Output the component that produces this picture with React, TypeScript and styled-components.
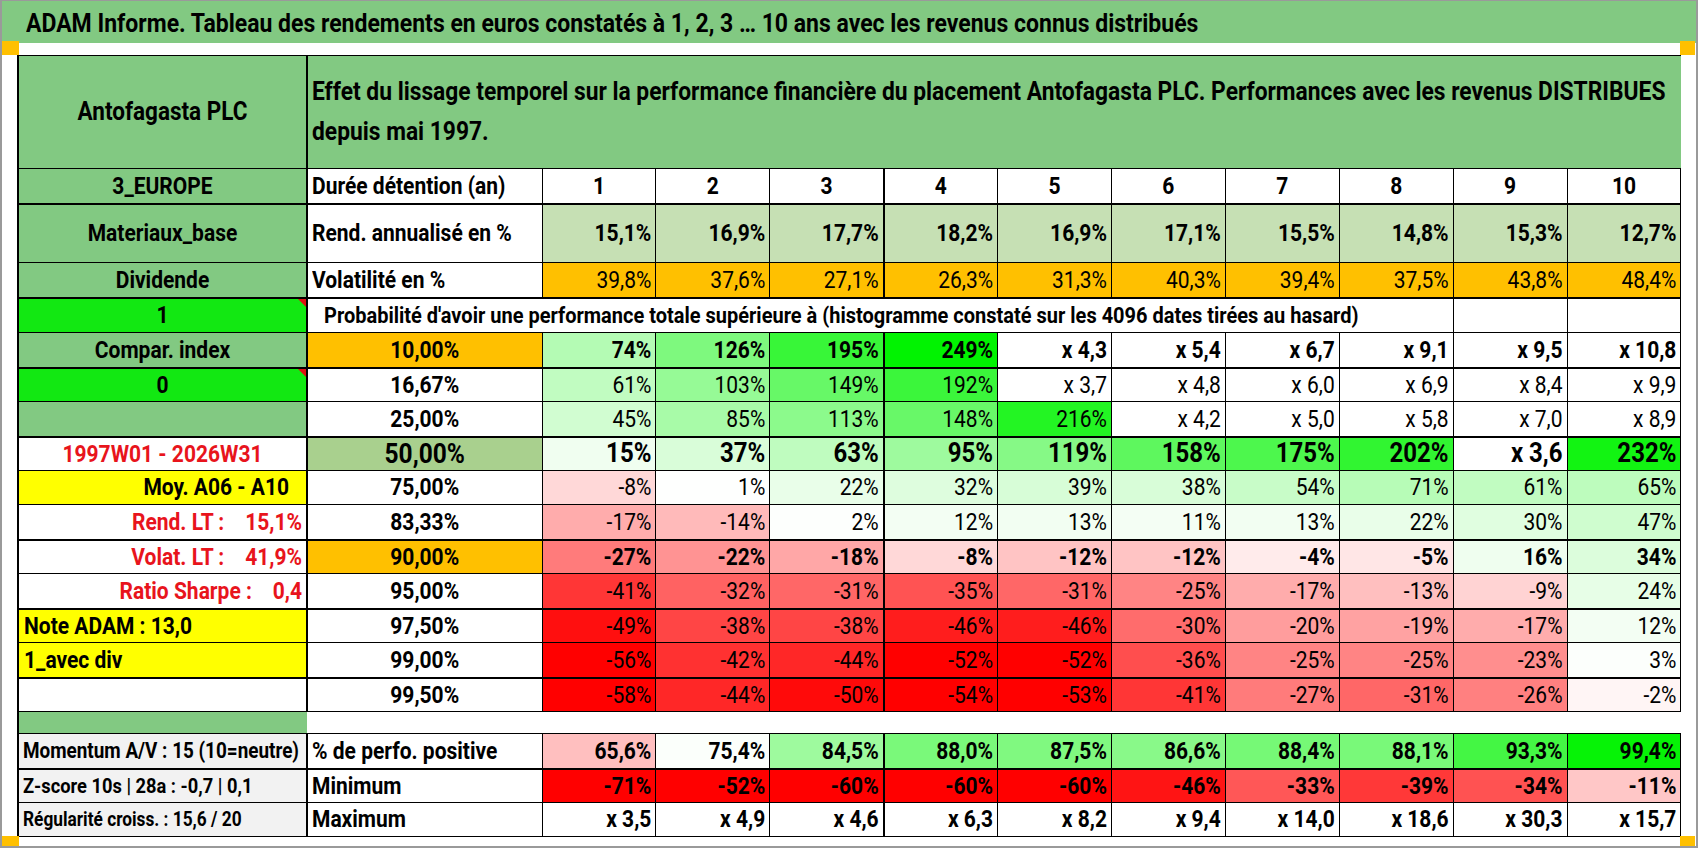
import React from 'react';
import styled, { createGlobalStyle, css } from 'styled-components';

const FONT = `Roboto, "Liberation Sans", sans-serif`;

const GREEN = '#82c982';
const BRIGHT = '#12e812';
const ORANGE = '#ffc000';
const YELLOW = '#ffff00';
const OLIVE = '#c6e0b4';
const MID = '#a9d08e';
const GREY = '#f2f2f2';
const RED_TEXT = '#e8141c';
const STRETCH = 'scaleY(1.14)';

const GlobalStyle = createGlobalStyle`
  html, body { margin: 0; padding: 0; background: #fff; }
  body { font-family: ${FONT}; }
`;

const Frame = styled.div`
  position: relative;
  box-sizing: border-box;
  width: 1698px;
  height: 848px;
  background: #fff;
  border-top: 1px solid #9a9a9a;
  border-left: 2px solid #9a9a9a;
  border-right: 2px solid #9a9a9a;
  border-bottom: 2px solid #9a9a9a;
  overflow: hidden;
  font-family: ${FONT};
  color: #000;
`;

const TitleBar = styled.div`
  height: 42px;
  box-sizing: border-box;
  background: ${GREEN};
  padding: 3px 0 0 24px;
  display: flex;
  align-items: center;
  font-size: 23px;
  font-weight: 700;
  white-space: nowrap;
`;

const Txt = styled.span`
  display: inline-block;
  transform: ${STRETCH};
  transform-origin: 50% 55%;
`;

const Sheet = styled.div`
  padding: 12px 0 0 15px;
`;

const Grid = styled.table`
  border-collapse: collapse;
  table-layout: fixed;
  width: 1663px;
`;

const Col = styled.col<{ $w: number }>`
  width: ${(p) => p.$w}px;
`;

const Row = styled.tr<{ $h: number; $thick?: boolean; $top?: boolean }>`
  height: ${(p) => p.$h}px;
  --bb: ${(p) => (p.$thick ? '2px' : '1px')} solid #000;
  --bt: ${(p) => (p.$top ? '1px solid #000' : 'none')};
`;

type Align = 'left' | 'center' | 'right';

type TdProps = {
  $bg?: string;
  $align?: Align;
  $bold?: boolean;
  $size?: number;
  $color?: string;
  $thickRight?: boolean;
  $noRight?: boolean;
  $noBottom?: boolean;
  $pl?: number;
  $pr?: number;
  $flag?: boolean;
};

const Td = styled.td<TdProps>`
  box-sizing: border-box;
  padding: 0 ${(p) => p.$pr ?? 4}px 0 ${(p) => p.$pl ?? 4}px;
  background: ${(p) => p.$bg ?? '#fff'};
  text-align: ${(p) => p.$align ?? 'right'};
  font-weight: ${(p) => (p.$bold ? 700 : 400)};
  font-size: ${(p) => p.$size ?? 21}px;
  color: ${(p) => p.$color ?? '#000'};
  white-space: pre;
  overflow: hidden;
  vertical-align: middle;
  line-height: 1.15;
  border-top: var(--bt);
  border-bottom: ${(p) => (p.$noBottom ? 'none' : 'var(--bb)')};
  border-right: ${(p) => (p.$noRight ? 'none' : p.$thickRight ? '2px solid #000' : '1px solid #000')};
  &:first-child {
    border-left: 2px solid #000;
  }
  ${(p) =>
    p.$flag &&
    css`
      position: relative;
      &::after {
        content: '';
        position: absolute;
        top: 0;
        right: 0;
        border-top: 8px solid #e01010;
        border-left: 8px solid transparent;
      }
    `}
`;

const Cell = ({ children, colSpan, ...rest }: TdProps & { colSpan?: number; children?: React.ReactNode }) => (
  <Td colSpan={colSpan} {...rest}>
    {children !== undefined && children !== '' ? <Txt>{children}</Txt> : null}
  </Td>
);

const HeadCell = styled.td`
  box-sizing: border-box;
  padding: 0 4px;
  background: ${GREEN};
  border-top: var(--bt);
  border-bottom: var(--bb);
  vertical-align: middle;
`;

const HeadText = styled.div`
  font-size: 22.8px;
  font-weight: 700;
  line-height: 40px;
  white-space: nowrap;
  transform: ${STRETCH};
  transform-origin: 50% 55%;
`;

const Handle = styled.div<{ $left: number; $top: number; $w: number; $h: number }>`
  position: absolute;
  left: ${(p) => p.$left}px;
  top: ${(p) => p.$top}px;
  width: ${(p) => p.$w}px;
  height: ${(p) => p.$h}px;
  background: ${ORANGE};
`;

const clamp = (t: number) => Math.max(0, Math.min(1, t));
const green = (t: number) => {
  const k = clamp(t);
  const c = Math.round(255 * (1 - k));
  const g = Math.round(255 - 12 * k);
  return `rgb(${c},${g},${c})`;
};
const red = (t: number) => {
  const c = Math.round(255 * (1 - clamp(t)));
  return `rgb(255,${c},${c})`;
};
const num = (s: string) => parseFloat(s.replace('%', '').replace(',', '.'));
const quantBg = (s: string) => {
  if (s.startsWith('x')) return '#ffffff';
  const v = num(s);
  return v >= 0 ? green(v / 250) : red(-v / 52);
};

const YEARS = ['1', '2', '3', '4', '5', '6', '7', '8', '9', '10'];
const REND = ['15,1%', '16,9%', '17,7%', '18,2%', '16,9%', '17,1%', '15,5%', '14,8%', '15,3%', '12,7%'];
const VOL = ['39,8%', '37,6%', '27,1%', '26,3%', '31,3%', '40,3%', '39,4%', '37,5%', '43,8%', '48,4%'];

type QRow = {
  a: string;
  aBg: string;
  aAlign?: Align;
  aColor?: string;
  aPr?: number;
  aPl?: number;
  flag?: boolean;
  q: string;
  qBg: string;
  bold?: boolean;
  big?: boolean;
  thick?: boolean;
  h: number;
  vals: string[];
};

const QROWS: QRow[] = [
  { a: 'Compar. index', aBg: GREEN, q: '10,00%', qBg: ORANGE, bold: true, thick: true, h: 35,
    vals: ['74%', '126%', '195%', '249%', 'x 4,3', 'x 5,4', 'x 6,7', 'x 9,1', 'x 9,5', 'x 10,8'] },
  { a: '0', aBg: BRIGHT, flag: true, q: '16,67%', qBg: '#fff', h: 34,
    vals: ['61%', '103%', '149%', '192%', 'x 3,7', 'x 4,8', 'x 6,0', 'x 6,9', 'x 8,4', 'x 9,9'] },
  { a: '', aBg: GREEN, q: '25,00%', qBg: '#fff', thick: true, h: 35,
    vals: ['45%', '85%', '113%', '148%', '216%', 'x 4,2', 'x 5,0', 'x 5,8', 'x 7,0', 'x 8,9'] },
  { a: '1997W01 - 2026W31', aBg: '#fff', aColor: RED_TEXT, q: '50,00%', qBg: MID, bold: true, big: true, h: 34,
    vals: ['15%', '37%', '63%', '95%', '119%', '158%', '175%', '202%', 'x 3,6', '232%'] },
  { a: 'Moy. A06 - A10', aBg: YELLOW, aAlign: 'right', aPr: 17, q: '75,00%', qBg: '#fff', h: 34,
    vals: ['-8%', '1%', '22%', '32%', '39%', '38%', '54%', '71%', '61%', '65%'] },
  { a: 'Rend. LT :    15,1%', aBg: '#fff', aAlign: 'right', aColor: RED_TEXT, aPr: 4, q: '83,33%', qBg: '#fff', thick: true, h: 35,
    vals: ['-17%', '-14%', '2%', '12%', '13%', '11%', '13%', '22%', '30%', '47%'] },
  { a: 'Volat. LT :    41,9%', aBg: '#fff', aAlign: 'right', aColor: RED_TEXT, aPr: 4, q: '90,00%', qBg: ORANGE, bold: true, h: 34,
    vals: ['-27%', '-22%', '-18%', '-8%', '-12%', '-12%', '-4%', '-5%', '16%', '34%'] },
  { a: 'Ratio Sharpe :    0,4', aBg: '#fff', aAlign: 'right', aColor: RED_TEXT, aPr: 4, q: '95,00%', qBg: '#fff', thick: true, h: 35,
    vals: ['-41%', '-32%', '-31%', '-35%', '-31%', '-25%', '-17%', '-13%', '-9%', '24%'] },
  { a: 'Note ADAM : 13,0', aBg: YELLOW, aAlign: 'left', aPl: 5, q: '97,50%', qBg: '#fff', h: 34,
    vals: ['-49%', '-38%', '-38%', '-46%', '-46%', '-30%', '-20%', '-19%', '-17%', '12%'] },
  { a: '1_avec div', aBg: YELLOW, aAlign: 'left', aPl: 5, q: '99,00%', qBg: '#fff', thick: true, h: 35,
    vals: ['-56%', '-42%', '-44%', '-52%', '-52%', '-36%', '-25%', '-25%', '-23%', '3%'] },
  { a: '', aBg: '#fff', q: '99,50%', qBg: '#fff', h: 34,
    vals: ['-58%', '-44%', '-50%', '-54%', '-53%', '-41%', '-27%', '-31%', '-26%', '-2%'] },
];

const POS = ['65,6%', '75,4%', '84,5%', '88,0%', '87,5%', '86,6%', '88,4%', '88,1%', '93,3%', '99,4%'];
const MIN = ['-71%', '-52%', '-60%', '-60%', '-60%', '-46%', '-33%', '-39%', '-34%', '-11%'];
const MAX = ['x 3,5', 'x 4,9', 'x 4,6', 'x 6,3', 'x 8,2', 'x 9,4', 'x 14,0', 'x 18,6', 'x 30,3', 'x 15,7'];

const posBg = (s: string) => {
  const v = num(s);
  return v >= 75 ? green((v - 75) / 25) : red((75 - v) / 37.5);
};
const minBg = (s: string) => red(-num(s) / 50);

const ValueCells = ({ vals, bg, bold, size }: { vals: string[]; bg: (s: string) => string; bold?: boolean; size?: number }) => (
  <>
    {vals.map((v, i) => (
      <Cell key={i} $bg={bg(v)} $bold={bold} $size={size} $thickRight={i === 2}>
        {v}
      </Cell>
    ))}
  </>
);

export default function App() {
  return (
    <>
      <GlobalStyle />
      <Frame>
        <TitleBar>
          <Txt>ADAM Informe. Tableau des rendements en euros constatés à 1, 2, 3 … 10 ans avec les revenus connus distribués</Txt>
        </TitleBar>
        <Sheet>
          <Grid>
            <colgroup>
              <Col $w={289} />
              <Col $w={235} />
              {YEARS.map((y) => (
                <Col key={y} $w={113.9} />
              ))}
            </colgroup>
            <tbody>
              <Row $h={113} $top>
                <Cell $bg={GREEN} $align="center" $bold $size={22.5} $thickRight>
                  Antofagasta PLC
                </Cell>
                <HeadCell colSpan={11}>
                  <HeadText>
                    Effet du lissage temporel sur la performance financière du placement Antofagasta PLC. Performances avec les revenus DISTRIBUES
                  </HeadText>
                  <HeadText>depuis mai 1997.</HeadText>
                </HeadCell>
              </Row>
              <Row $h={35} $thick>
                <Cell $bg={GREEN} $align="center" $bold $thickRight>3_EUROPE</Cell>
                <Cell $align="left" $bold>Durée détention (an)</Cell>
                {YEARS.map((y, i) => (
                  <Cell key={y} $align="center" $bold $thickRight={i === 2}>
                    {y}
                  </Cell>
                ))}
              </Row>
              <Row $h={59}>
                <Cell $bg={GREEN} $align="center" $bold $thickRight>Materiaux_base</Cell>
                <Cell $align="left" $bold>Rend. annualisé en %</Cell>
                <ValueCells vals={REND} bg={() => OLIVE} bold />
              </Row>
              <Row $h={35} $thick>
                <Cell $bg={GREEN} $align="center" $bold $thickRight>Dividende</Cell>
                <Cell $align="left" $bold>Volatilité en %</Cell>
                <ValueCells vals={VOL} bg={() => ORANGE} />
              </Row>
              <Row $h={35}>
                <Cell $bg={BRIGHT} $align="center" $bold $thickRight $flag>1</Cell>
                <Cell colSpan={9} $align="left" $bold $size={20} $pl={16}>
                  Probabilité d'avoir une performance totale supérieure à (histogramme constaté sur les 4096 dates tirées au hasard)
                </Cell>
                <Cell />
                <Cell />
              </Row>
              {QROWS.map((r) => (
                <Row key={r.q} $h={r.h} $thick={r.thick}>
                  <Cell
                    $bg={r.aBg}
                    $align={r.aAlign ?? 'center'}
                    $color={r.aColor}
                    $pr={r.aPr}
                    $pl={r.aPl}
                    $bold
                    $thickRight
                    $flag={r.flag}
                  >
                    {r.a}
                  </Cell>
                  <Cell $bg={r.qBg} $align="center" $bold $size={r.big ? 24.5 : 21}>
                    {r.q}
                  </Cell>
                  <ValueCells vals={r.vals} bg={quantBg} bold={r.bold} size={r.big ? 24 : 21} />
                </Row>
              ))}
              <Row $h={22}>
                <Cell $bg={GREEN} $noRight $noBottom />
                <Cell colSpan={11} $noRight $noBottom />
              </Row>
              <Row $h={35} $thick $top>
                <Cell $bg={GREY} $align="left" $bold $size={18.9} $thickRight>Momentum A/V : 15 (10=neutre)</Cell>
                <Cell $align="left" $bold>% de perfo. positive</Cell>
                <ValueCells vals={POS} bg={posBg} bold />
              </Row>
              <Row $h={34}>
                <Cell $bg={GREY} $align="left" $bold $size={18.3} $thickRight>Z-score 10s | 28a : -0,7 | 0,1</Cell>
                <Cell $align="left" $bold>Minimum</Cell>
                <ValueCells vals={MIN} bg={minBg} bold />
              </Row>
              <Row $h={34}>
                <Cell $bg={GREY} $align="left" $bold $size={17.3} $thickRight>Régularité croiss. : 15,6 / 20</Cell>
                <Cell $align="left" $bold>Maximum</Cell>
                <ValueCells vals={MAX} bg={() => '#fff'} bold />
              </Row>
            </tbody>
          </Grid>
        </Sheet>
        <Handle $left={-2} $top={40} $w={19} $h={14} />
        <Handle $left={1678} $top={40} $w={15} $h={14} />
        <Handle $left={-2} $top={835} $w={19} $h={10} />
        <Handle $left={1678} $top={835} $w={15} $h={10} />
      </Frame>
    </>
  );
}
